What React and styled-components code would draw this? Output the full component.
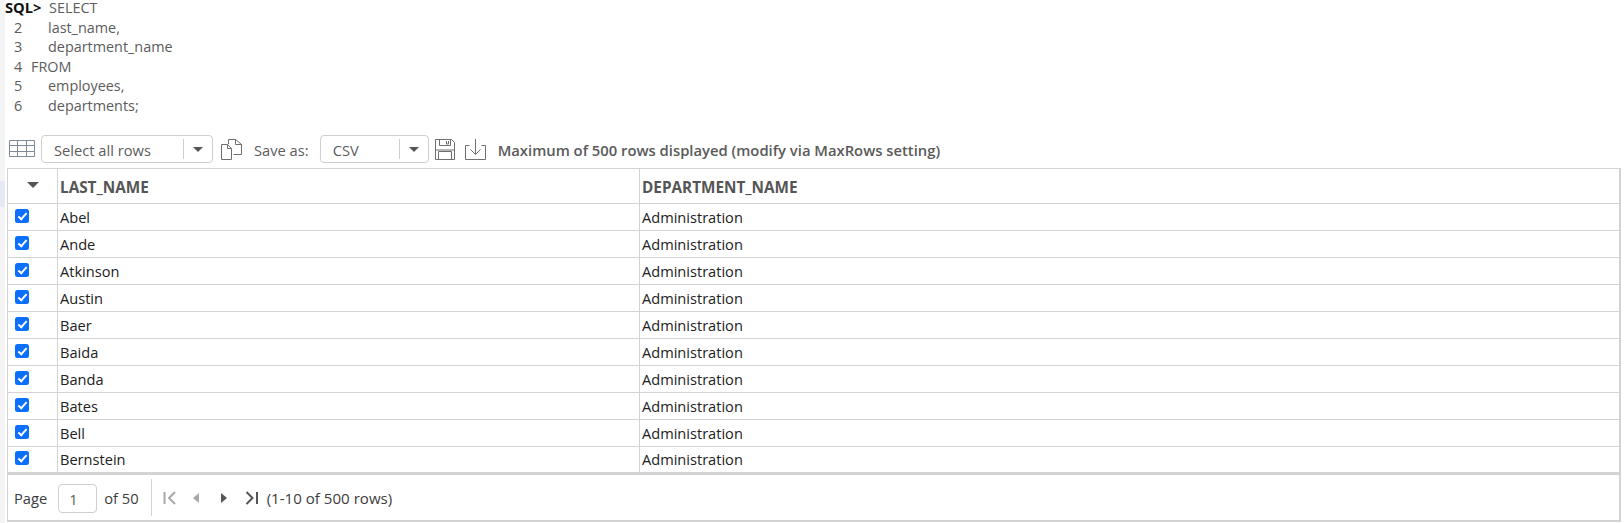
import React from 'react';
import styled, { createGlobalStyle } from 'styled-components';

const GlobalStyle = createGlobalStyle`
  html, body {
    margin: 0;
    padding: 0;
    background: #ffffff;
  }
  body {
    font-family: "Open Sans", "Noto Sans", sans-serif;
    color: #505050;
  }
`;

const Page = styled.div`
  width: 1624px;
  height: 523px;
  overflow: hidden;
  display: flex;
`;

const Rail = styled.div`
  width: 5px;
  flex: none;
  background: #f4f4f4;
  padding-top: 181px;

  &::before {
    content: '';
    display: block;
    height: 26px;
    background: #e6e9f4;
  }
`;

const Content = styled.div`
  flex: 1;
  min-width: 0;
  padding: 0 3px 1px 2px;
  display: flex;
  flex-direction: column;
`;

const SqlBlock = styled.div`
  margin-left: -2px;
  height: 130px;
  flex: none;
  font-size: 14.4px;
  line-height: 19.6px;
  color: #5c5c5c;
`;

const SqlLine = styled.div`
  display: flex;
  height: 19.6px;
  white-space: nowrap;

  &:first-child {
    height: 17.6px;
    line-height: 15.6px;
  }
`;

const Prompt = styled.span`
  font-size: 14.7px;
  font-weight: 700;
  color: #111111;
  width: 44px;
`;

const LineNo = styled.span`
  width: ${({ $wide }) => ($wide ? '43px' : '26px')};
  padding-left: 9px;
  box-sizing: border-box;
`;

const Toolbar = styled.div`
  height: 38px;
  flex: none;
  display: flex;
  align-items: center;
  margin-left: 2px;
  font-size: 14.7px;
`;

const SelectBox = styled.div`
  width: ${({ $w }) => $w}px;
  height: 28px;
  box-sizing: border-box;
  border: 1px solid #cfcfcf;
  border-radius: 4px;
  margin-left: ${({ $ml }) => $ml}px;
  display: flex;
  align-items: center;
  background: #fff;
`;

const SelectText = styled.span`
  flex: 1;
  padding: 1px 0 0 12px;
  color: #5c5c5c;
`;

const SelectArrow = styled.span`
  width: 28px;
  height: 20px;
  border-left: 1px solid #cfcfcf;
  display: flex;
  align-items: center;
  justify-content: center;

  &::after {
    content: '';
    border-left: 5px solid transparent;
    border-right: 5px solid transparent;
    border-top: 5px solid #555;
  }
`;

const ToolLabel = styled.span`
  margin-left: ${({ $ml }) => $ml}px;
  padding-top: 1px;
  color: #5c5c5c;
`;

const Message = styled.span`
  margin-left: 12px;
  padding-top: 1px;
  font-size: 14.8px;
  font-weight: 600;
  color: #5a5a5a;
  white-space: nowrap;
`;

const IconSvg = styled.svg`
  flex: none;
  margin-left: ${({ $ml }) => $ml || 0}px;
`;

const GridWrap = styled.div`
  flex: 1;
  border: 1px solid #d3d3d3;
  border-right-width: 2px;
  border-bottom-width: 2px;
  display: flex;
  flex-direction: column;
`;

const Row = styled.div`
  display: grid;
  grid-template-columns: 50px 582px 1fr;
  height: ${({ $h }) => $h}px;
  flex: none;
  box-sizing: border-box;
  border-bottom: ${({ $bb }) => $bb}px solid #d3d3d3;
`;

const Cell = styled.div`
  display: flex;
  align-items: center;
  padding: 0 0 ${({ $last }) => ($last ? 2 : 0)}px 2px;
  font-size: 14.6px;
  color: #222222;
  border-right: 1px solid #d3d3d3;
  &:last-child { border-right: none; }
`;

const HeadCell = styled(Cell)`
  padding-top: 1px;
  font-size: 15.3px;
  font-weight: 700;
  color: #555555;
`;

const CheckCell = styled(Cell)`
  padding: 0 0 ${({ $last }) => ($last ? 3 : 2)}px 7px;
`;

const SortCell = styled(Cell)`
  justify-content: center;
  padding: 0 0 2px;

  &::after {
    content: '';
    border-left: 6px solid transparent;
    border-right: 6px solid transparent;
    border-top: 6px solid #555;
  }
`;

const Check = styled.input.attrs({ type: 'checkbox', readOnly: true })`
  appearance: none;
  width: 14px;
  height: 14px;
  margin: 0;
  border-radius: 2.5px;
  background: #0b6ffd;
  position: relative;

  &::after {
    content: '';
    position: absolute;
    left: 4.5px;
    top: 1.5px;
    width: 3px;
    height: 7px;
    border: solid #fff;
    border-width: 0 2px 2px 0;
    transform: rotate(42deg);
  }
`;

const Pager = styled.div`
  flex: 1;
  display: flex;
  align-items: center;
  font-size: 14.7px;
  color: #3c3c3c;
  padding-left: 6px;
`;

const PageInput = styled.div`
  width: 39px;
  height: 29px;
  box-sizing: border-box;
  border: 1px solid #cfcfcf;
  border-radius: 4px;
  margin: 1px 7px 0 11px;
  padding: 4px 0 0 10px;
  color: #5c5c5c;
`;

const PagerDivider = styled.span`
  width: 1px;
  height: 37px;
  background: #d3d3d3;
  margin: 0 11px 0 12px;
`;

const RowsCount = styled.span`
  margin-left: 8px;
  font-size: 15.1px;
`;

const GridIcon = () => (
  <IconSvg width="26" height="18" viewBox="0 0 26 18" fill="none" stroke="#7d8a99" strokeWidth="1">
    <path d="M.5.5h25v16H.5zM.5 5.5h25M.5 11.5h25M8.5.5v16M17.5.5v16" />
  </IconSvg>
);

const CopyIcon = () => (
  <IconSvg $ml={7} width="23" height="23" viewBox="0 0 23 23" fill="none" stroke="#6f6f6f" strokeWidth="1">
    <path d="M1.5 6.5h6l4 4v11h-10zM7.5 6.5v4h4M8.5 6V1.5h7l6 5v10h-8M15.5 1.5v5h6" />
  </IconSvg>
);

const SaveIcon = () => (
  <IconSvg $ml={5} width="22" height="23" viewBox="0 0 22 23" fill="none" stroke="#6f6f6f" strokeWidth="1">
    <path d="M1.5 1.5h16l3 3v17h-19zM4.5 21.5v-8h13v8M5.5 1.5v6h11v-6M12.5 3v3h2V3M1.5 12h19" />
  </IconSvg>
);

const DownloadIcon = () => (
  <IconSvg $ml={9} width="21" height="23" viewBox="0 0 21 23" fill="none" stroke="#6f6f6f" strokeWidth="1">
    <path d="M4.5 7.5h-4v14h20v-14h-4M10.5 1v15M5.5 11.5l5 5 5-5" />
  </IconSvg>
);

const PagerIcon = ({ kind }) => {
  const icons = {
    first: <path d="M1.5 1v12M12 1 6 7l6 6" fill="none" stroke="#a8a8a8" strokeWidth="2" />,
    prev: <path d="M7 2v10L1 7z" fill="#a8a8a8" />,
    next: <path d="M1 2v10l6-5z" fill="#555" />,
    last: <path d="M12 1v12M1.5 1l6 6-6 6" fill="none" stroke="#555" strokeWidth="2" />,
  };
  const small = kind === 'prev' || kind === 'next';
  const ml = { first: 0, prev: 15, next: 20, last: 17 }[kind];
  return (
    <IconSvg $ml={ml} width={small ? 8 : 14} height="14" viewBox={small ? '0 0 8 14' : '0 0 14 14'}>
      {icons[kind]}
    </IconSvg>
  );
};

const names = ['Abel', 'Ande', 'Atkinson', 'Austin', 'Baer', 'Baida', 'Banda', 'Bates', 'Bell', 'Bernstein'];

const App = () => (
  <Page>
    <GlobalStyle />
    <Rail />
    <Content>
      <SqlBlock>
        <SqlLine><Prompt>SQL&gt;</Prompt>SELECT</SqlLine>
        <SqlLine><LineNo $wide>2</LineNo>last_name,</SqlLine>
        <SqlLine><LineNo $wide>3</LineNo>department_name</SqlLine>
        <SqlLine><LineNo>4</LineNo>FROM</SqlLine>
        <SqlLine><LineNo $wide>5</LineNo>employees,</SqlLine>
        <SqlLine><LineNo $wide>6</LineNo>departments;</SqlLine>
      </SqlBlock>
      <Toolbar>
        <GridIcon />
        <SelectBox $w={172} $ml={6}>
          <SelectText>Select all rows</SelectText>
          <SelectArrow />
        </SelectBox>
        <CopyIcon />
        <ToolLabel $ml={11}>Save as:</ToolLabel>
        <SelectBox $w={109} $ml={11}>
          <SelectText>CSV</SelectText>
          <SelectArrow />
        </SelectBox>
        <SaveIcon />
        <DownloadIcon />
        <Message>Maximum of 500 rows displayed (modify via MaxRows setting)</Message>
      </Toolbar>
      <GridWrap>
        <Row $h={35} $bb={1}>
          <SortCell />
          <HeadCell>LAST_NAME</HeadCell>
          <HeadCell>DEPARTMENT_NAME</HeadCell>
        </Row>
        {names.map((name, i) => (
          <Row key={name} $h={i === 9 ? 28 : 27} $bb={i === 9 ? 3 : 1}>
            <CheckCell $last={i === 9}><Check defaultChecked /></CheckCell>
            <Cell $last={i === 9}>{name}</Cell>
            <Cell $last={i === 9}>Administration</Cell>
          </Row>
        ))}
        <Pager>
          Page
          <PageInput>1</PageInput>
          of 50
          <PagerDivider />
          <PagerIcon kind="first" />
          <PagerIcon kind="prev" />
          <PagerIcon kind="next" />
          <PagerIcon kind="last" />
          <RowsCount>(1-10 of 500 rows)</RowsCount>
        </Pager>
      </GridWrap>
    </Content>
  </Page>
);

export default App;
